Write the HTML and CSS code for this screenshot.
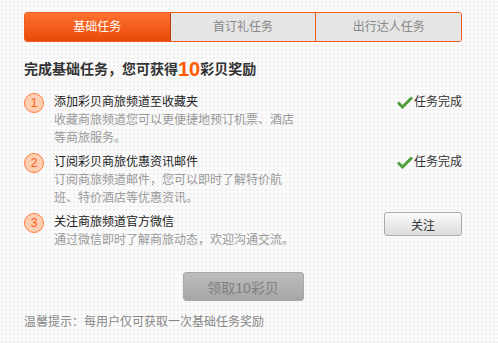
FILE: index.html
```html
<!DOCTYPE html>
<html lang="zh-CN">
<head>
    <meta charset="UTF-8">
    <title>彩贝任务</title>
    <link rel="stylesheet" href="styles.css">
</head>
<body>
    <div class="task-box">
        <ul class="tabs">
            <li class="active">基础任务</li>
            <li>首订礼任务</li>
            <li>出行达人任务</li>
        </ul>

        <h2 class="task-title">完成基础任务，您可获得<em>10</em>彩贝奖励</h2>

        <ol class="task-list">
            <li class="task-item">
                <span class="num">1</span>
                <div class="task-text">
                    <h3>添加彩贝商旅频道至收藏夹</h3>
                    <p>收藏商旅频道您可以更便捷地预订机票、酒店<br>等商旅服务。</p>
                </div>
                <span class="done">
                    <svg width="16" height="13" viewBox="0 0 16 13"><path d="M1 6.5 L5.5 11 L15 1.5" fill="none" stroke="#4f9e3a" stroke-width="3"/></svg>任务完成
                </span>
            </li>
            <li class="task-item">
                <span class="num">2</span>
                <div class="task-text">
                    <h3>订阅彩贝商旅优惠资讯邮件</h3>
                    <p>订阅商旅频道邮件，您可以即时了解特价航<br>班、特价酒店等优惠资讯。</p>
                </div>
                <span class="done">
                    <svg width="16" height="13" viewBox="0 0 16 13"><path d="M1 6.5 L5.5 11 L15 1.5" fill="none" stroke="#4f9e3a" stroke-width="3"/></svg>任务完成
                </span>
            </li>
            <li class="task-item">
                <span class="num">3</span>
                <div class="task-text">
                    <h3>关注商旅频道官方微信</h3>
                    <p>通过微信即时了解商旅动态，欢迎沟通交流。</p>
                </div>
                <button class="follow-btn">关注</button>
            </li>
        </ol>

        <div class="get-wrap">
            <button class="get-btn" disabled>领取10彩贝</button>
        </div>

        <p class="tip">温馨提示：每用户仅可获取一次基础任务奖励</p>
    </div>
</body>
</html>
```

FILE: styles.css
```css
body {
    margin: 0;
    font-family: "Liberation Sans", "Noto Sans CJK SC", sans-serif;
    font-size: 12px;
    color: #333;
    background-color: #fbfbfb;
    background-image: radial-gradient(circle, #efefef 0.8px, transparent 1px);
    background-size: 4px 4px;
}
.task-box {
    width: 438px;
    padding: 12px 24px;
}
.tabs {
    list-style: none;
    margin: 0;
    padding: 0;
    display: flex;
    border: 1px solid #ee5a1c;
    border-radius: 3px;
    overflow: hidden;
}
.tabs li {
    flex: 1;
    height: 28px;
    line-height: 28px;
    text-align: center;
    background-color: #e5e5e5;
    color: #888;
    font-size: 12px;
    border-left: 1px solid #ee5a1c;
}
.tabs li:first-child {
    border-left: none;
}
.tabs li.active {
    color: #fff;
    background: linear-gradient(#ff7131, #e84a08);
    border-right: 1px solid #b9400c;
}
.tabs li.active + li {
    border-left: none;
}
.task-title {
    margin: 15px 0 0;
    height: 24px;
    line-height: 24px;
    font-size: 14px;
    font-weight: bold;
    color: #333;
}
.task-title em {
    font-style: normal;
    font-family: "Liberation Sans", Arial, sans-serif;
    font-size: 20px;
    color: #ff5a00;
    vertical-align: top;
}
.task-list {
    list-style: none;
    margin: 12px 0 0;
    padding: 0;
}
.task-item {
    display: flex;
    align-items: flex-start;
    margin-bottom: 6px;
}
.task-item:last-child {
    margin-bottom: 0;
}
.num {
    width: 18px;
    height: 18px;
    line-height: 18px;
    border: 1px solid #ff7a3a;
    border-radius: 50%;
    background-color: #fdcfb2;
    color: #ff5a14;
    text-align: center;
    font-size: 12px;
    margin-right: 10px;
    flex-shrink: 0;
}
.task-text {
    flex-grow: 1;
}
.task-text h3 {
    margin: 0;
    font-size: 12px;
    font-weight: normal;
    line-height: 18px;
    color: #222;
}
.task-text p {
    margin: 0;
    line-height: 18px;
    color: #999;
}
.done {
    display: flex;
    align-items: center;
    line-height: 18px;
    color: #333;
}
.done svg {
    margin-right: 1px;
}
.follow-btn {
    width: 78px;
    height: 24px;
    margin-top: -1px;
    border: 1px solid #aaa;
    border-radius: 3px;
    background: linear-gradient(#fbfbfb, #dcdcdc);
    font-family: inherit;
    font-size: 12px;
    color: #333;
    cursor: pointer;
}
.get-wrap {
    margin-top: 23px;
    text-align: center;
}
.get-btn {
    width: 121px;
    height: 29px;
    border: 1px solid #a8a8a8;
    border-radius: 3px;
    background: linear-gradient(#bdbdbd, #a6a6a6);
    font-family: inherit;
    font-size: 14px;
    color: #808080;
}
.tip {
    margin: 12px 0 0;
    line-height: 18px;
    color: #888;
}
```
